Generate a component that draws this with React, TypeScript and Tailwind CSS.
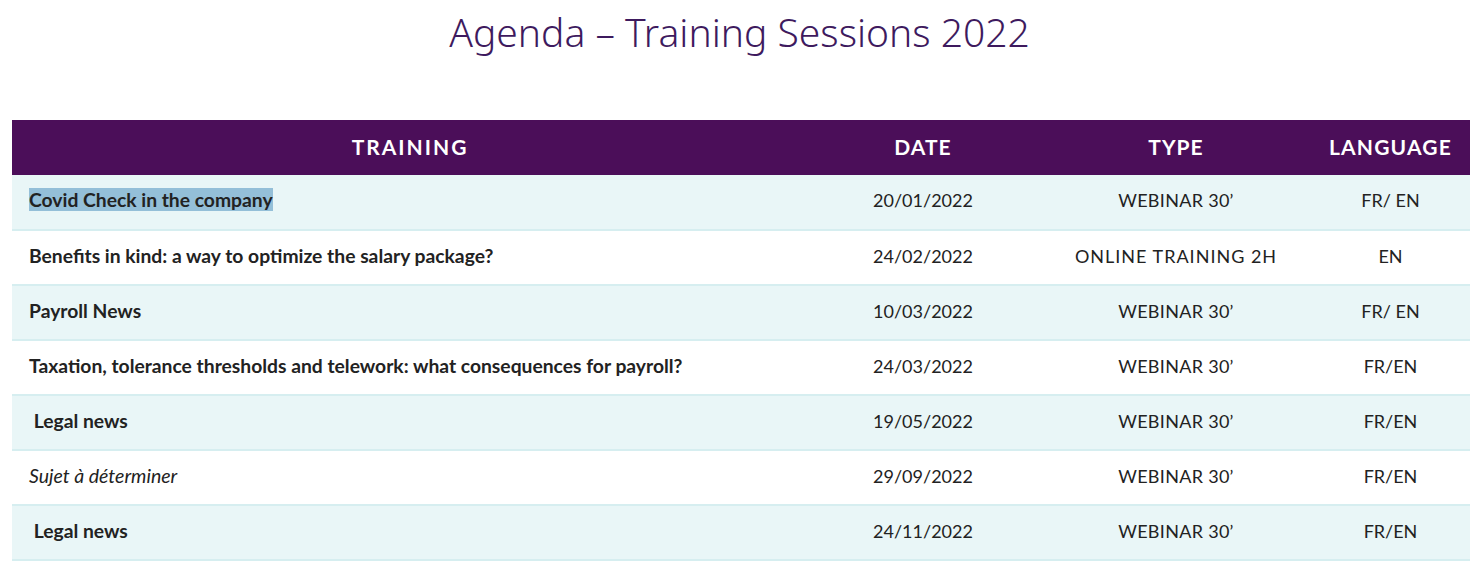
const rows = [
  { title: "Covid Check in the company", date: "20/01/2022", type: "WEBINAR 30’", lang: "FR/ EN", selected: true },
  { title: "Benefits in kind: a way to optimize the salary package?", date: "24/02/2022", type: "ONLINE TRAINING 2H", lang: "EN" },
  { title: "Payroll News", date: "10/03/2022", type: "WEBINAR 30’", lang: "FR/ EN" },
  { title: "Taxation, tolerance thresholds and telework: what consequences for payroll?", date: "24/03/2022", type: "WEBINAR 30’", lang: "FR/EN" },
  { title: "\u00a0Legal news", date: "19/05/2022", type: "WEBINAR 30’", lang: "FR/EN" },
  { title: "Sujet à déterminer", date: "29/09/2022", type: "WEBINAR 30’", lang: "FR/EN", italic: true },
  { title: "\u00a0Legal news", date: "24/11/2022", type: "WEBINAR 30’", lang: "FR/EN" },
]

export default function App() {
  return (
    <div className="w-[1479px] h-[576px] bg-white overflow-hidden" style={{ fontFamily: "Lato, 'Noto Sans', sans-serif" }}>
      <h1
        className="text-center text-[39px] leading-[64px] font-light text-[#3e1a5e]"
        style={{ fontFamily: "'Noto Sans', sans-serif" }}
      >
        Agenda – Training Sessions 2022
      </h1>
      <div className="pl-[12px] pr-[9px] pt-[56px]">
        <table className="w-full border-collapse text-[#222]">
          <thead>
            <tr className="bg-[#4b0e59] text-white h-[55px]">
              <th className="w-[796px] text-[21px] font-bold tracking-[2px] text-center pb-[2px]">TRAINING</th>
              <th className="w-[230px] text-[21px] font-bold tracking-[1px] text-center pb-[2px]">DATE</th>
              <th className="w-[276px] text-[21px] font-bold tracking-[1px] text-center pb-[2px]">TYPE</th>
              <th className="text-[21px] font-bold tracking-[1.2px] text-center pb-[2px] pr-[3px]">LANGUAGE</th>
            </tr>
          </thead>
          <tbody>
            {rows.map((r, i) => (
              <tr
                key={i}
                className={
                  (i % 2 === 0 ? "bg-[#e9f6f7]" : "bg-white") +
                  " h-[55px] border-b-2 border-[#d6eef0]"
                }
              >
                <td className="pl-[17px] pb-[3px]">
                  {r.selected ? (
                    <span className="text-[19.3px] font-bold bg-[#94bfd8]">{r.title}</span>
                  ) : r.italic ? (
                    <span className="text-[19.5px] italic">{r.title}</span>
                  ) : (
                    <span className="text-[19.3px] font-bold">{r.title}</span>
                  )}
                </td>
                <td className="text-center text-[18px] pb-[3px]">{r.date}</td>
                <td className={"text-center text-[18px] pb-[3px] " + (r.type.length > 12 ? "tracking-[1px]" : "tracking-[0.3px]")}>{r.type}</td>
                <td className="text-center text-[18px] pb-[3px] pr-[3px]">{r.lang}</td>
              </tr>
            ))}
          </tbody>
        </table>
      </div>
    </div>
  )
}
